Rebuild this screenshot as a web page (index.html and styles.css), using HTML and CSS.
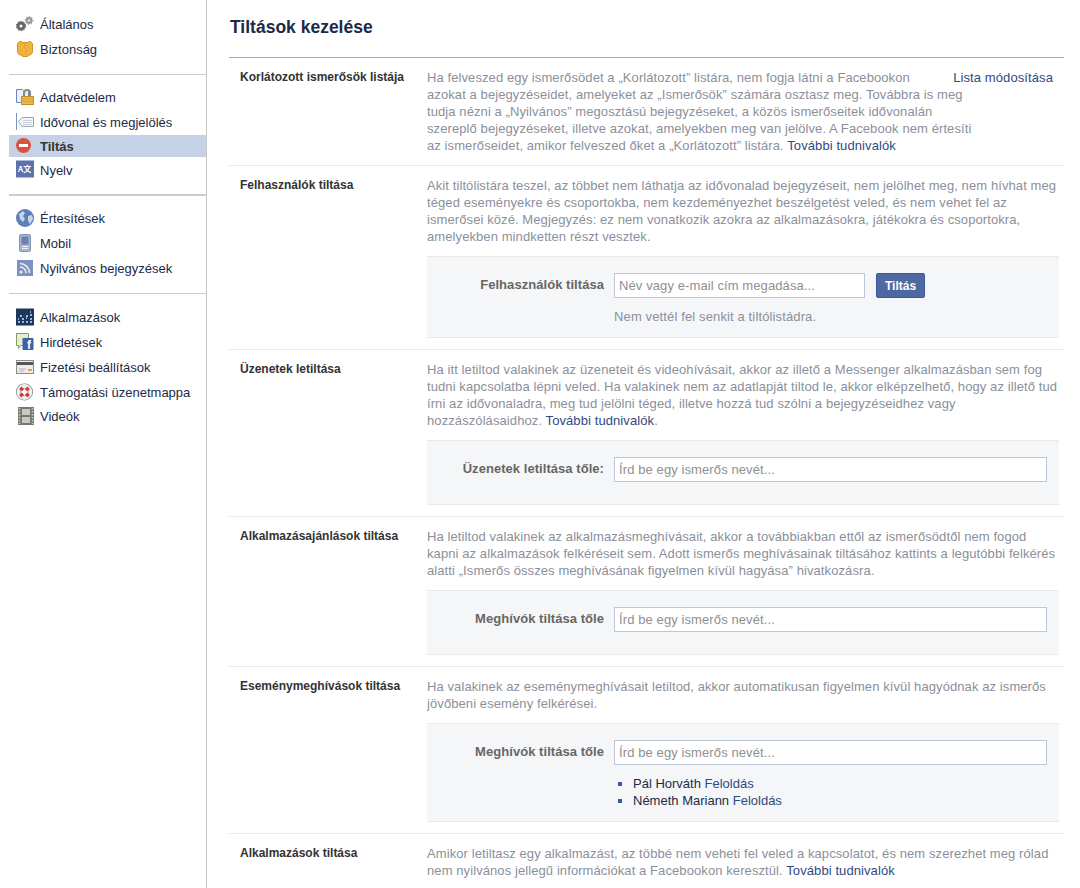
FILE: index.html
```html
<!DOCTYPE html>
<html lang="hu">
<head>
<meta charset="utf-8">
<title>Tiltások kezelése</title>
<link rel="stylesheet" href="styles.css">
</head>
<body>
<div class="page">
<nav class="side">
  <ul class="group g1">
    <li class="item"><svg class="ic" viewBox="0 0 18 18"><circle cx="5" cy="11" r="3" fill="none" stroke="#666" stroke-width="3"/><circle cx="5" cy="11" r="4.700" fill="none" stroke="#666" stroke-width="1" stroke-dasharray="1.500 1.500"/><circle cx="13" cy="5.500" r="2.300" fill="#e6e6e6" stroke="#999" stroke-width="2.200"/><circle cx="13" cy="5.500" r="4" fill="none" stroke="#999" stroke-width="1" stroke-dasharray="1.500 1.500"/></svg><span>Általános</span></li>
    <li class="item"><svg class="ic" viewBox="0 0 18 18"><path d="M3.500 1.500h2l1 1h5l1-1h2l2 2v9l-2 2.500h-2l-1 1.500h-5l-1-1.500h-2l-2-2.500v-9z" fill="#f2b23e" stroke="#d19526"/><path d="M9 3v5l2 2.500-2 4" fill="none" stroke="#dc9f2c"/></svg><span>Biztonság</span></li>
  </ul>
  <ul class="group g2">
    <li class="item"><svg class="ic" viewBox="0 0 18 18"><path d="M.5 1.500h6l1 1h5v12h-12z" fill="#eef1f8" stroke="#6f86b5"/><path d="M8 9V5a3 3 0 0 1 6 0v4" fill="none" stroke="#8a8a8a" stroke-width="2.200"/><rect x="5.500" y="8.500" width="12" height="8" fill="#efb74a" stroke="#c08f2e"/><path d="M6 11h11M6 13.500h11" stroke="#dca238"/></svg><span>Adatvédelem</span></li>
    <li class="item"><svg class="ic" viewBox="0 0 18 18"><path d="M.5 0v17" stroke="#7d93bd"/><path d="M2.500 8.500l3.500-4h11.500v9H6z" fill="#f4f5f8" stroke="#9aa3b4"/><path d="M7 7.500h9M7 9.500h9M7 11.500h9" stroke="#c9cfdb"/></svg><span>Idővonal és megjelölés</span></li>
    <li class="item sel"><svg class="ic" viewBox="0 0 18 18"><circle cx="7.500" cy="9.500" r="7.500" fill="#d6533f"/><rect x="3" y="8" width="9" height="3" fill="#fff"/></svg><span>Tiltás</span></li>
    <li class="item tail"><svg class="ic" viewBox="0 0 18 18"><rect y=".5" width="18" height="17" fill="#5b73ab"/><text x="2" y="11.500" class="ict">A文</text></svg><span>Nyelv</span></li>
  </ul>
  <ul class="group g3">
    <li class="item"><svg class="ic" viewBox="0 0 18 18"><circle cx="9" cy="9" r="9" fill="#5f7fb8"/><path d="M3 5l4-3 2 2-2 3 2 3-2 3-3-3zM12 7l4-1 1 4-3 5-2-3z" fill="#c8d4e8"/></svg><span>Értesítések</span></li>
    <li class="item"><svg class="ic" viewBox="0 0 18 18"><rect x="3.500" y=".5" width="11" height="17" rx="1.500" fill="#a9b6d0" stroke="#8494b6"/><rect x="5.500" y="2.500" width="7" height="8" fill="#6d81ab"/><path d="M6 12.500h6M6 14.500h6" stroke="#eef1f7"/></svg><span>Mobil</span></li>
    <li class="item"><svg class="ic" viewBox="0 0 18 18"><rect x="1" y="1" width="16" height="16" fill="#7e92bf"/><circle cx="5" cy="13" r="1.600" fill="#e6ebf5"/><path d="M4 8a6 6 0 0 1 6 6M4 4.500a9.500 9.500 0 0 1 9.500 9.500" fill="none" stroke="#e6ebf5" stroke-width="1.700"/></svg><span>Nyilvános bejegyzések</span></li>
  </ul>
  <ul class="group g4">
    <li class="item"><svg class="ic" viewBox="0 0 18 18"><rect y=".5" width="18" height="17" fill="#1f3559"/><path d="M2 14h2M2 11h1M6 14h2M6 11h2M10 14h2M10 10h1M10 8h2M14 14h2M14 11h2M14 7h2M14 4h1" stroke="#8dbbe6" stroke-width="2"/><path d="M4 8h2" stroke="#dfe9f5" stroke-width="1.500"/></svg><span>Alkalmazások</span></li>
    <li class="item"><svg class="ic" viewBox="0 0 18 18"><path d="M.5.500h12v12h-8l-2 3v-3h-2z" fill="#e3edd2" stroke="#7fa05a"/><rect x="6.500" y="5" width="11" height="12" rx="1" fill="#3f5fa5"/><text x="11" y="16" class="icf">f</text></svg><span>Hirdetések</span></li>
    <li class="item"><svg class="ic" viewBox="0 0 18 18"><rect x=".5" y="2.500" width="17" height="13" fill="#ededed" stroke="#8a8a8a"/><rect x="1" y="4" width="16" height="3" fill="#555"/><rect x="12" y="11" width="4" height="2" fill="#e3a63a"/><path d="M3 11h7M3 13h5" stroke="#b5b5b5"/></svg><span>Fizetési beállítások</span></li>
    <li class="item"><svg class="ic" viewBox="0 0 18 18"><circle cx="8.500" cy="9" r="6" fill="none" stroke="#777" stroke-width="5"/><circle cx="8.500" cy="9" r="6" fill="none" stroke="#f1f1f1" stroke-width="3.800"/><path d="M4.300 4.800l2.600 2.600M12.700 4.800l-2.600 2.600M4.300 13.200l2.600-2.600M12.700 13.200l-2.600-2.600" stroke="#d23b2d" stroke-width="3.400"/></svg><span>Támogatási üzenetmappa</span></li>
    <li class="item short"><svg class="ic" viewBox="0 0 18 18"><rect x="2" y="0" width="16" height="18" fill="#77776f"/><path d="M3.500 1v16M16.500 1v16" stroke="#ccc" stroke-width="1.500" stroke-dasharray="1.500 1.500"/><rect x="6" y="2" width="8" height="6" fill="#c9c9c0"/><rect x="6" y="10" width="8" height="6" fill="#c9c9c0"/></svg><span>Videók</span></li>
  </ul>
</nav>

<main class="main">
  <h1 class="title">Tiltások kezelése</h1>
  <div class="rows">
    <section class="row">
      <h2 class="rtitle">Korlátozott ismerősök listája</h2>
      <div class="rbody split">
        <a class="lnk edit">Lista módosítása</a>
        <p class="desc">Ha felveszed egy ismerősödet a „Korlátozott” listára, nem fogja látni a Facebookon<br>azokat a bejegyzéseidet, amelyeket az „Ismerősök” számára osztasz meg. Továbbra is meg<br>tudja nézni a „Nyilvános” megosztású bejegyzéseket, a közös ismerőseitek idővonalán<br>szereplő bejegyzéseket, illetve azokat, amelyekben meg van jelölve. A Facebook nem értesíti<br>az ismerőseidet, amikor felveszed őket a „Korlátozott” listára. <a class="lnk">További tudnivalók</a></p>
      </div>
    </section>

    <section class="row">
      <h2 class="rtitle">Felhasználók tiltása</h2>
      <div class="rbody">
        <p class="desc">Akit tiltólistára teszel, az többet nem láthatja az idővonalad bejegyzéseit, nem jelölhet meg, nem hívhat meg téged eseményekre és csoportokba, nem kezdeményezhet beszélgetést veled, és nem vehet fel az ismerősei közé. Megjegyzés: ez nem vonatkozik azokra az alkalmazásokra, játékokra és csoportokra, amelyekben mindketten részt vesztek.</p>
        <div class="box box-note">
          <div class="frow">
            <label class="flabel">Felhasználók tiltása</label>
            <input class="inp short" type="text" placeholder="Név vagy e-mail cím megadása...">
            <button class="btn" type="button">Tiltás</button>
          </div>
          <p class="note">Nem vettél fel senkit a tiltólistádra.</p>
        </div>
      </div>
    </section>

    <section class="row">
      <h2 class="rtitle">Üzenetek letiltása</h2>
      <div class="rbody">
        <p class="desc">Ha itt letiltod valakinek az üzeneteit és videohívásait, akkor az illető a Messenger alkalmazásban sem fog tudni kapcsolatba lépni veled. Ha valakinek nem az adatlapját tiltod le, akkor elképzelhető, hogy az illető tud írni az idővonaladra, meg tud jelölni téged, illetve hozzá tud szólni a bejegyzéseidhez vagy hozzászólásaidhoz. <a class="lnk">További tudnivalók</a>.</p>
        <div class="box">
          <div class="frow">
            <label class="flabel">Üzenetek letiltása tőle:</label>
            <input class="inp" type="text" placeholder="Írd be egy ismerős nevét...">
          </div>
        </div>
      </div>
    </section>

    <section class="row">
      <h2 class="rtitle">Alkalmazásajánlások tiltása</h2>
      <div class="rbody">
        <p class="desc">Ha letiltod valakinek az alkalmazásmeghívásait, akkor a továbbiakban ettől az ismerősödtől nem fogod kapni az alkalmazások felkéréseit sem. Adott ismerős meghívásainak tiltásához kattints a legutóbbi felkérés alatti „Ismerős összes meghívásának figyelmen kívül hagyása” hivatkozásra.</p>
        <div class="box">
          <div class="frow">
            <label class="flabel">Meghívók tiltása tőle</label>
            <input class="inp" type="text" placeholder="Írd be egy ismerős nevét...">
          </div>
        </div>
      </div>
    </section>

    <section class="row">
      <h2 class="rtitle">Eseménymeghívások tiltása</h2>
      <div class="rbody">
        <p class="desc">Ha valakinek az eseménymeghívásait letiltod, akkor automatikusan figyelmen kívül hagyódnak az ismerős jövőbeni esemény felkérései.</p>
        <div class="box box-list">
          <div class="frow">
            <label class="flabel">Meghívók tiltása tőle</label>
            <input class="inp" type="text" placeholder="Írd be egy ismerős nevét...">
          </div>
          <ul class="blocked">
            <li><a class="name">Pál Horváth</a> <a class="lnk">Feloldás</a></li>
            <li><a class="name">Németh Mariann</a> <a class="lnk">Feloldás</a></li>
          </ul>
        </div>
      </div>
    </section>

    <section class="row last">
      <h2 class="rtitle">Alkalmazások tiltása</h2>
      <div class="rbody">
        <p class="desc">Amikor letiltasz egy alkalmazást, az többé nem veheti fel veled a kapcsolatot, és nem szerezhet meg rólad nem nyilvános jellegű információkat a Facebookon keresztül. <a class="lnk">További tudnivalók</a></p>
      </div>
    </section>
  </div>
</main>
</div>
</body>
</html>
```
FILE: styles.css
```css
* { box-sizing: border-box; }
html, body { margin: 0; padding: 0; height: 100%; overflow: hidden; background: #fff; }
body { font-family: "Liberation Sans", Arial, sans-serif; font-size: 12px; color: #333; }
.page { display: flex; height: 888px; overflow: hidden; }
.side { width: 207px; flex: none; border-right: 1px solid #c8c8c8; padding-left: 9px; }
.group { list-style: none; margin: 0; padding: 0; border-bottom: 1px solid #ccc; }
.group:last-child { border-bottom: 0; }
.g1 { padding-top: 12px; height: 75px; }
.g2 { padding-top: 10px; height: 121px; border-bottom-width: 2px; }
.g3 { padding-top: 10px; height: 98px; }
.g4 { padding-top: 11px; }
.item { display: flex; align-items: center; height: 25px; padding-left: 7px; font-size: 13px; color: #1c2a47; }
.item.short { height: 23px; }
.ic { width: 18px; height: 18px; flex: none; margin: -2px 6px 0 0; display: block; }
.ict { font-size: 8px; font-weight: bold; fill: #fff; font-family: "Noto Sans CJK SC", "Liberation Sans", sans-serif; }
.icf { font-size: 12px; font-weight: bold; fill: #fff; font-family: "Liberation Sans", sans-serif; }
.sel { height: 22px; background: #c4d1e6; font-weight: bold; color: #333; }
.tail { height: 26px; }
.main { flex: 1; min-width: 0; padding: 0 16px 0 22px; }
.title { margin: 0; font-size: 17.5px; line-height: 22px; font-weight: bold; color: #1c2a47; padding: 16px 0 0 1px; height: 57px; }
.rows { border-top: 1px solid #aaa; }
.row { display: flex; border-bottom: 1px solid #e9e9e9; padding: 11px 5px 11px 11px; }
.row.last { border-bottom: 0; }
.rtitle { margin: 0; width: 187px; flex: none; font-size: 12px; line-height: 17px; font-weight: bold; color: #333; }
.rbody { flex: 1; min-width: 0; }
.split { padding-right: 6px; }
.desc { margin: 0; font-size: 13px; line-height: 17px; letter-spacing: .09px; color: #8b8f9b; }
.edit { float: right; white-space: nowrap; font-size: 13px; line-height: 17px; letter-spacing: .1px; }
.lnk { color: #30497f; }
.box { margin-top: 11px; background: #f5f6f8; border-top: 1px solid #e9e9e9; border-bottom: 1px solid #e9e9e9; padding: 16px 12px 22px 0; }
.box-note { padding-bottom: 12px; }
.box-list { padding-bottom: 12px; }
.frow { display: flex; align-items: center; }
.flabel { width: 177px; flex: none; text-align: right; font-size: 13px; font-weight: bold; letter-spacing: .05px; color: #666; margin: -2px 10px 0 0; line-height: 20px; }
.inp { flex: 1; min-width: 0; height: 25px; border: 1px solid #bdc7d8; background: #fff; padding: 0 4px; font: 13px "Liberation Sans", Arial, sans-serif; letter-spacing: .1px; color: #333; }
.inp::placeholder { color: #8f8f8f; opacity: 1; }
.inp.short { flex: none; width: 251px; }
.btn { margin-left: 11px; height: 25px; width: 49px; padding: 0; background: #4e69a2; border: 1px solid #3b5998; border-radius: 2px; color: #fff; font: bold 12px "Liberation Sans", Arial, sans-serif; }
.note { margin: 10px 0 0 187px; font-size: 13px; line-height: 17px; letter-spacing: .13px; color: #8b8f9b; }
.blocked { margin: 10px 0 0 187px; padding: 0; list-style: none; font-size: 13px; line-height: 17px; }
.blocked li { position: relative; padding-left: 19px; }
.blocked li::before { content: ""; position: absolute; left: 4px; top: 7px; width: 4px; height: 4px; background: #3b5998; }
.name { color: #1c2a47; }
```
